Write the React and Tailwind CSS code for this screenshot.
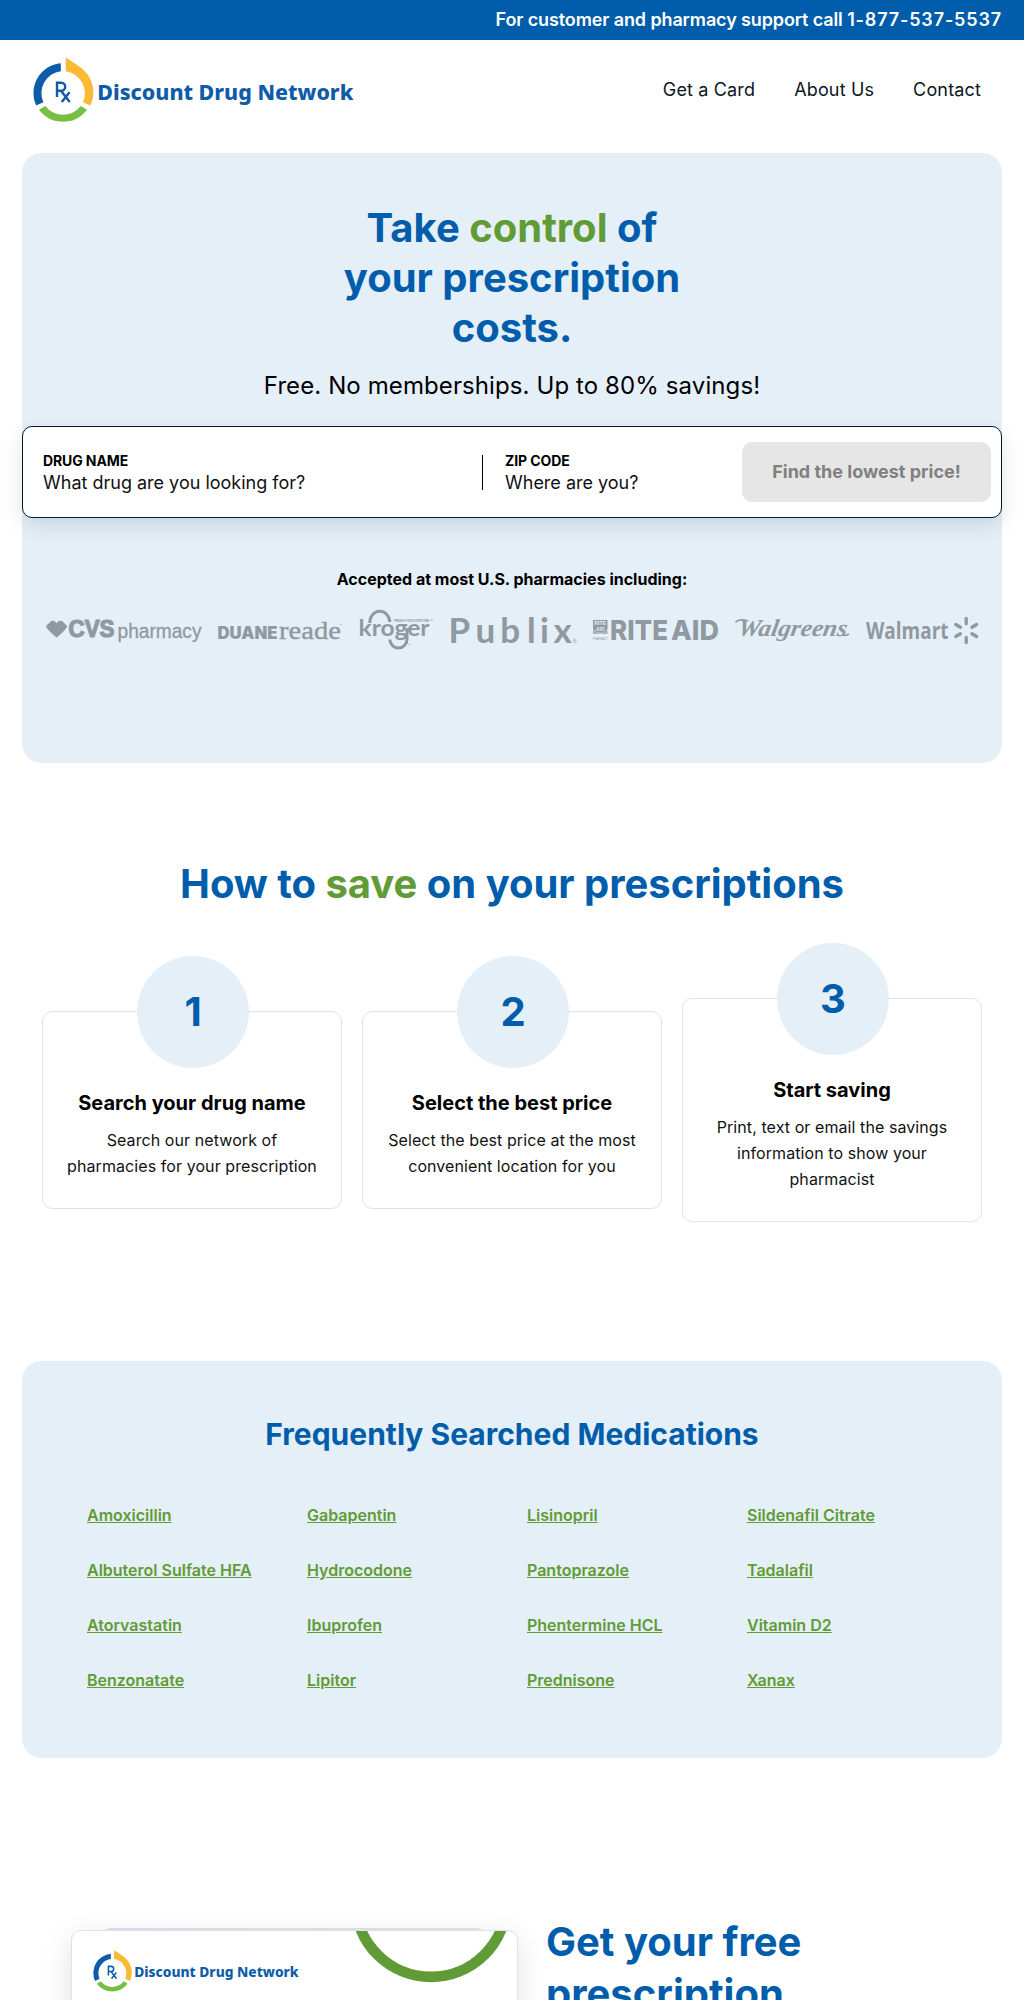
const medications = [
  'Amoxicillin', 'Gabapentin', 'Lisinopril', 'Sildenafil Citrate',
  'Albuterol Sulfate HFA', 'Hydrocodone', 'Pantoprazole', 'Tadalafil',
  'Atorvastatin', 'Ibuprofen', 'Phentermine HCL', 'Vitamin D2',
  'Benzonatate', 'Lipitor', 'Prednisone', 'Xanax',
];

const steps = [
  { n: '1', title: 'Search your drug name', lines: ['Search our network of', 'pharmacies for your prescription'] },
  { n: '2', title: 'Select the best price', lines: ['Select the best price at the most', 'convenient location for you'] },
  { n: '3', title: 'Start saving', lines: ['Print, text or email the savings', 'information to show your', 'pharmacist'] },
];

const LATO = 'Lato, "Open Sans", sans-serif';
const NOTO = '"Noto Sans", "Open Sans", sans-serif';
const ARIAL = '"Liberation Sans", sans-serif';
const INTER = 'Inter, sans-serif';
const SERIF = '"Liberation Serif", serif';

function BrandLogo({ className }) {
  return (
    <svg className={className} viewBox="0 0 324 68" aria-label="Discount Drug Network">
      <path d="M27.8 7.3 A29.8 29.8 0 0 0 3.2 49.5 L10.3 46.2 A22.2 22.2 0 0 1 27.8 15.2 Z" fill="#0d5ca9" />
      <path d="M32.8 1.5 L47 11 A31 31 0 0 1 57.5 49.5 L50 46.2 A22.2 22.2 0 0 0 32.8 15.2 Z" fill="#fcb933" />
      <path d="M6 53.7 L12.3 50 A22.2 22.2 0 0 0 47.7 50 L54 53.7 A29.8 29.8 0 0 1 6 53.7 Z" fill="#76bf43" />
      <path d="M24 41 V26.8 H28.2 A4 4 0 0 1 28.2 34.8 H24 M28 34.8 L36.7 46 M36.5 36.3 L28.8 46" fill="none" stroke="#0d5ca9" strokeWidth="2.4" />
      <text x="64.3" y="44" textLength="256" lengthAdjust="spacingAndGlyphs" fontFamily={NOTO} fontWeight="800" fontSize="21.5" fill="#0d5ca9">Discount Drug Network</text>
    </svg>
  );
}

function PharmacyLogos() {
  return (
    <div className="flex h-11 gap-4 pl-6 text-[#8f999f]">
      <svg className="w-[156px] overflow-visible" viewBox="46 608 156 44" fill="currentColor">
        <path d="M46 626 L51.5 620.8 Q54 620 56.5 623 Q59 620 61.8 620.8 L67.2 626 Q67 629 56.7 637.5 Q46 629 46 626 Z" />
        <text x="68.5" y="637.3" textLength="46" lengthAdjust="spacingAndGlyphs" fontFamily={ARIAL} fontWeight="700" fontSize="23" stroke="currentColor" strokeWidth="1.2">CVS</text>
        <text x="117.5" y="638" textLength="84" lengthAdjust="spacingAndGlyphs" fontFamily={ARIAL} fontSize="19.5" stroke="currentColor" strokeWidth=".3">pharmacy</text>
      </svg>
      <svg className="w-[125px] overflow-visible" viewBox="218 608 125 44" fill="currentColor">
        <text x="217.5" y="639" textLength="60" lengthAdjust="spacingAndGlyphs" fontFamily={INTER} fontWeight="900" fontSize="16.8">DUANE</text>
        <text x="279" y="639" textLength="62" lengthAdjust="spacingAndGlyphs" fontFamily={SERIF} fontSize="26" stroke="currentColor" strokeWidth=".4">reade</text>
        <text x="339.3" y="626" fontFamily={ARIAL} fontSize="3">™</text>
      </svg>
      <svg className="w-[75px] overflow-visible" viewBox="359 608 75 44" fill="currentColor">
        <text x="358.5" y="636.2" textLength="71" lengthAdjust="spacingAndGlyphs" fontFamily={LATO} fontWeight="700" fontSize="22.5">kroger</text>
        <path d="M369.8 623 A9.8 11 0 0 1 389.8 622 M407 628 V639 A8.6 8.8 0 0 1 389.8 639.5" fill="none" stroke="currentColor" strokeWidth="3" />
        <text x="394" y="621.5" textLength="39" lengthAdjust="spacingAndGlyphs" fontFamily={ARIAL} fontWeight="700" fontSize="3.6">FRESH FOR EVERYONE ™</text>
        <text x="408.5" y="646" fontFamily={ARIAL} fontSize="3">®</text>
      </svg>
      <svg className="w-[127px] overflow-visible" viewBox="450 608 127 44" fill="currentColor">
        <text x="448.6 475.4 500.2 527 540 553.4" y="642.6" fontFamily={LATO} fontWeight="700" fontSize="35">Publix</text>
        <text x="572.5" y="643" fontFamily={ARIAL} fontSize="6">®</text>
      </svg>
      <svg className="w-[126px] overflow-visible" viewBox="593 608 126 44" fill="currentColor">
        <path d="M593 620 H607.5 V628.5 Q607 631.5 600.3 633 Q594 631.5 593 628.5 Z" />
        <g fill="#e5eff7" fontFamily={ARIAL} fontWeight="700" fontSize="5">
          <text x="594.2" y="625" textLength="12" lengthAdjust="spacingAndGlyphs">RITE</text>
          <text x="596" y="630.5" textLength="8.5" lengthAdjust="spacingAndGlyphs">AID</text>
        </g>
        <path d="M593 630 L600.2 634 L607.5 630 V634 H593 Z" opacity=".7" />
        <text x="593" y="639.8" textLength="14.5" lengthAdjust="spacingAndGlyphs" fontFamily={ARIAL} fontSize="3.4">PHARMACY</text>
        <g fontFamily={INTER} fontWeight="800" fontSize="27.5">
          <text x="610" y="640" textLength="58" lengthAdjust="spacingAndGlyphs">RITE</text>
          <text x="671" y="640" textLength="48" lengthAdjust="spacingAndGlyphs">AID</text>
        </g>
      </svg>
      <svg className="w-[115px] overflow-visible" viewBox="735 608 115 44" fill="currentColor">
        <g transform="translate(736 635.8) skewX(-10)">
          <text x="1" y="0" textLength="109" lengthAdjust="spacingAndGlyphs" fontFamily={SERIF} fontStyle="italic" fontWeight="700" fontSize="24">Walgreens</text>
        </g>
        <path d="M735.5 622 Q740 618.5 747 620.5 M843 635 Q846 636 849 634" fill="none" stroke="currentColor" strokeWidth="1.6" />
      </svg>
      <svg className="w-[114px] overflow-visible" viewBox="866 608 114 44" fill="currentColor">
        <text x="866" y="639" textLength="82.5" lengthAdjust="spacingAndGlyphs" fontFamily='"Open Sans", sans-serif' fontWeight="700" fontSize="23.5">Walmart</text>
        <g stroke="currentColor" strokeWidth="3.4" strokeLinecap="round">
          <path d="M966.2 618.5 V623.8 M966.2 637.5 V642.5 M955.8 624.5 L960.4 627.2 M972 633.8 L976.6 636.5 M955.8 636.5 L960.4 633.8 M972 627.2 L976.6 624.5" />
        </g>
      </svg>
    </div>
  );
}

export default function App() {
  return (
    <div className="h-[2000px] overflow-hidden bg-white font-['Inter',sans-serif] text-black">
      <div className="flex h-10 items-center justify-end bg-[#005dab] pr-[22px] pb-px text-[18px] font-semibold text-white">
        <span className="tracking-[-0.12px] whitespace-nowrap">For customer and pharmacy support call <span className="tracking-[0.85px]">1-877-537-5537</span></span>
      </div>

      <header className="flex h-[113px] items-start justify-between pr-[43px] pl-[33px]">
        <BrandLogo className="mt-4 h-[68px] w-[324px] overflow-visible" />
        <nav className="mt-9 flex gap-[39px] text-[18px] leading-7 tracking-[0.15px] text-[#0b1621]">
          <a>Get a Card</a>
          <a>About Us</a>
          <a>Contact</a>
        </nav>
      </header>

      <section className="mx-[22px] h-[610px] rounded-[20px] bg-[#e5eff7] pt-[50px]">
        <h1 className="text-center text-[40px] leading-[50px] font-bold text-[#005dab]">
          Take <span className="text-[#619b35]">control</span> of<br />your prescription<br />costs.
        </h1>
        <p className="mt-[15px] text-center text-[24px] leading-9 tracking-[0.1px]">Free. No memberships. Up to 80% savings!</p>

        <form className="mt-[22px] flex h-[92px] items-center rounded-[10px] border border-[#071a2b] bg-white pr-[10px] pl-5 shadow-[0_8px_20px_rgba(10,50,70,0.13)]">
          <div className="w-[439px] pt-0.5">
            <div className="text-[14px] leading-5 font-bold tracking-[-0.1px]">DRUG NAME</div>
            <div className="text-[18px] leading-6 text-[#111]">What drug are you looking for?</div>
          </div>
          <div className="h-[35px] w-px bg-black" />
          <div className="ml-[22px] flex-1 pt-0.5">
            <div className="text-[14px] leading-5 font-bold tracking-[-0.1px]">ZIP CODE</div>
            <div className="text-[18px] leading-6 text-[#111]">Where are you?</div>
          </div>
          <button type="button" className="h-[60px] w-[249px] rounded-[10px] bg-[#e6e6e6] pb-0.5 text-[18px] font-bold text-[#808080]">Find the lowest price!</button>
        </form>

        <p className="mt-[49px] mb-[17px] text-center text-[16px] leading-6 font-bold">Accepted at most U.S. pharmacies including:</p>
        <PharmacyLogos />
      </section>

      <section className="pt-[96px]">
        <h2 className="text-center text-[40px] leading-[50px] font-bold tracking-[-0.03px] text-[#005dab]">
          How to <span className="text-[#619b35]">save</span> on your prescriptions
        </h2>
        <div className="mx-[42px] mt-[33px] flex h-[280px] items-end">
          <div className="flex items-center gap-5">
            {steps.map((s) => (
              <div key={s.n} className="flex w-[300px] flex-col items-center rounded-[10px] border border-[#dfe3e6] pb-[29px] text-center">
                <div className="-mt-14 ml-0.5 flex h-28 w-28 items-center justify-center rounded-full bg-[#e5eff7] text-[40px] font-bold text-[#005dab]">{s.n}</div>
                <h3 className="mt-[20px] text-[20px] leading-[30px] font-bold">{s.title}</h3>
                <p className="mt-[9px] text-[16px] leading-[26px] tracking-[0.08px] text-[#111]">
                  {s.lines.map((l) => <span key={l} className="block whitespace-nowrap">{l}</span>)}
                </p>
              </div>
            ))}
          </div>
        </div>
      </section>

      <section className="mx-[22px] mt-[139px] h-[397px] rounded-[20px] bg-[#e5eff7] pt-[52px]">
        <h2 className="text-center text-[30px] leading-[42px] font-bold text-[#005dab]">Frequently Searched Medications</h2>
        <ul className="mt-[32px] ml-[65px] grid auto-rows-[55px] grid-cols-[repeat(4,220px)] items-center text-[16px] font-semibold text-[#619b35]">
          {medications.map((m) => <li key={m}><a className="underline">{m}</a></li>)}
        </ul>
      </section>

      <section className="flex pt-[158px] pl-[71px]">
        <div className="relative mt-[14px] h-[280px] w-[447px] shrink-0">
          <div className="absolute -top-[2px] left-[30px] h-8 w-[386px] rounded-[10px] bg-gradient-to-r from-[#dfe3f3] to-[#e4e8e6]" />
          <div className="relative h-full overflow-hidden rounded-[10px] border border-[#e0e3e5] bg-white">
            <BrandLogo className="mt-[18px] ml-[21px] h-[44px] w-[208px] overflow-visible" />
            <svg className="absolute top-0 left-[270px] h-[60px] w-[180px]" viewBox="342 1931 180 60">
              <circle cx="431" cy="1901.4" r="75.5" fill="none" stroke="#619b35" strokeWidth="10.8" />
            </svg>
          </div>
          <div className="pointer-events-none absolute inset-0 rounded-[10px] shadow-[0_8px_30px_rgba(0,0,0,0.12)]" />
        </div>
        <h2 className="ml-[28px] text-[40px] leading-[52px] font-bold text-[#005dab]">Get your free<br />prescription</h2>
      </section>
    </div>
  );
}
